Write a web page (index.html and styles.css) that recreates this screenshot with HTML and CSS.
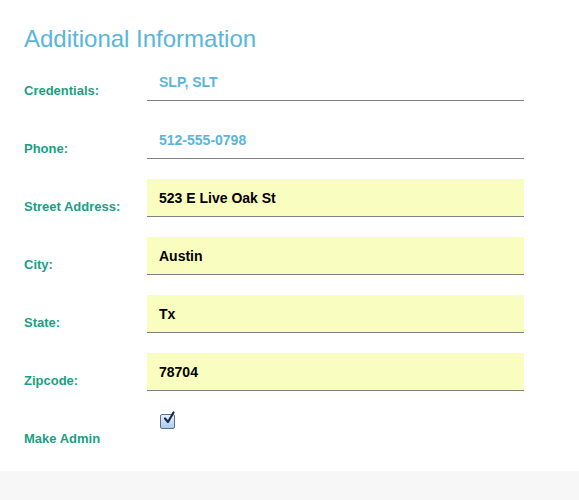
FILE: index.html
```html
<!DOCTYPE html>
<html>
<head>
<meta charset="utf-8">
<link rel="stylesheet" href="styles.css">
</head>
<body>
<div class="panel">
  <h1 class="title">Additional Information</h1>
  <div class="form">
    <div class="label">Credentials:</div>
    <div class="field static">SLP, SLT</div>
    <div class="label">Phone:</div>
    <div class="field static">512-555-0798</div>
    <div class="label">Street Address:</div>
    <div class="field edit">523 E Live Oak St</div>
    <div class="label">City:</div>
    <div class="field edit">Austin</div>
    <div class="label">State:</div>
    <div class="field edit">Tx</div>
    <div class="label">Zipcode:</div>
    <div class="field edit">78704</div>
    <div class="label">Make Admin</div>
    <div class="check-cell">
      <span class="checkbox">
        <svg width="14" height="15" viewBox="0 0 14 15">
          <path d="M3 7.5 L6 11 L11.5 1.5" fill="none" stroke="#1b2b4a" stroke-width="2.2" stroke-linecap="round" stroke-linejoin="round"/>
        </svg>
      </span>
    </div>
  </div>
</div>
<div class="footer"></div>
</body>
</html>
```
FILE: styles.css
```css
html, body {
  margin: 0;
  padding: 0;
  background: #f7f7f7;
  font-family: "Liberation Sans", Arial, Helvetica, sans-serif;
}
.panel {
  background: #ffffff;
  padding: 25px 0 22px 24px;
}
.title {
  margin: 0;
  font-size: 24px;
  line-height: 28px;
  font-weight: normal;
  color: #5ab5dc;
}
.form {
  margin-top: 10px;
  display: grid;
  grid-template-columns: 123px 377px;
  row-gap: 20px;
}
.label {
  align-self: end;
  padding-bottom: 3px;
  font-size: 13px;
  line-height: 14px;
  font-weight: bold;
  color: #1a9f82;
}
.field {
  height: 37px;
  border-bottom: 1px solid #808080;
  box-sizing: content-box;
  padding-left: 12px;
  display: flex;
  align-items: center;
  font-size: 14px;
  font-weight: bold;
}
.field.static {
  color: #5ab5dc;
}
.field.edit {
  background: #f9fdbf;
  color: #000000;
}
.check-cell {
  height: 38px;
  padding: 3px 0 0 13px;
  box-sizing: border-box;
}
.checkbox {
  display: block;
  width: 13px;
  height: 13px;
  border: 1px solid #5b6f8c;
  border-radius: 2px;
  background: linear-gradient(#e3f0fc, #a9cdf0);
  position: relative;
}
.checkbox svg {
  position: absolute;
  left: 1px;
  top: -4px;
}
.footer {
  height: 29px;
}
```
